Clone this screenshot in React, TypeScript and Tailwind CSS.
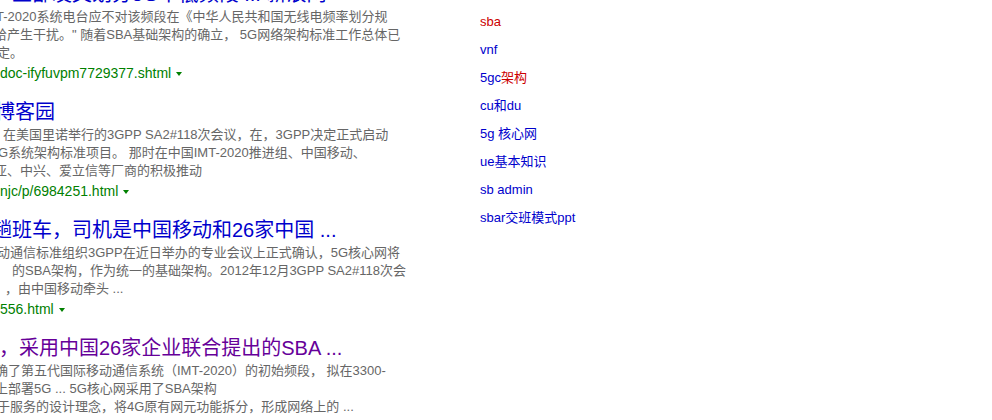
import React from 'react';

type Line = { text: string; shift: string };

type Result = {
  title: string;
  titleShift: string;
  visited?: boolean;
  lines: Line[];
  url: string;
};

const results: Result[] = [
  {
    title: '产业部发文划分5G中低频段 ... 新浪网',
    titleShift: 'ml-[-8px]',
    lines: [
      { text: 'T-2020系统电台应不对该频段在《中华人民共和国无线电频率划分规', shift: 'ml-[-4px]' },
      { text: '给产生干扰。" 随着SBA基础架构的确立， 5G网络架构标准工作总体已', shift: 'ml-[-6px]' },
      { text: '定。', shift: 'ml-[-3px]' },
    ],
    url: 'doc-ifyfuvpm7729377.shtml',
  },
  {
    title: '博客园',
    titleShift: 'ml-[-5px]',
    lines: [
      { text: '在美国里诺举行的3GPP SA2#118次会议，在，3GPP决定正式启动', shift: 'ml-[3px]' },
      { text: 'G系统架构标准项目。 那时在中国IMT-2020推进组、中国移动、', shift: 'ml-[-2px]' },
      { text: '亚、中兴、爱立信等厂商的积极推动', shift: 'ml-[-6px]' },
    ],
    url: 'njc/p/6984251.html',
  },
  {
    title: '趟班车，司机是中国移动和26家中国 ...',
    titleShift: 'ml-[-8px]',
    lines: [
      { text: '动通信标准组织3GPP在近日举办的专业会议上正式确认，5G核心网将', shift: 'ml-[-3px]' },
      { text: '的SBA架构，作为统一的基础架构。2012年12月3GPP SA2#118次会', shift: 'ml-[12px]' },
      { text: '，由中国移动牵头 ...', shift: 'ml-[5px]' },
    ],
    url: '556.html',
  },
  {
    title: '，采用中国26家企业联合提出的SBA ...',
    titleShift: 'ml-[-1px]',
    visited: true,
    lines: [
      { text: '确了第五代国际移动通信系统（IMT-2020）的初始频段， 拟在3300-', shift: 'ml-[-5px]' },
      { text: '上部署5G ... 5G核心网采用了SBA架构', shift: 'ml-[-5px]' },
      { text: '于服务的设计理念，将4G原有网元功能拆分，形成网络上的 ...', shift: 'ml-[-3px]' },
    ],
    url: '',
  },
];

const related: { parts: { t: string; red?: boolean }[] }[] = [
  { parts: [{ t: 'sba', red: true }] },
  { parts: [{ t: 'vnf' }] },
  { parts: [{ t: '5gc' }, { t: '架构', red: true }] },
  { parts: [{ t: 'cu和du' }] },
  { parts: [{ t: '5g 核心网' }] },
  { parts: [{ t: 'ue基本知识' }] },
  { parts: [{ t: 'sb admin' }] },
  { parts: [{ t: 'sbar交班模式ppt' }] },
];

function ResultItem({ r }: { r: Result }) {
  return (
    <div className="mb-[16px]">
      <div
        className={`h-[26px] whitespace-nowrap text-[20px] leading-[26px] ${r.titleShift} ${
          r.visited ? 'text-[#660099]' : 'text-[#0000cc]'
        }`}
      >
        {r.title}
      </div>
      <div className="mt-[1px] text-[13px] leading-[18px] text-[#666666]">
        {r.lines.map((l, i) => (
          <div key={i} className={`whitespace-nowrap ${l.shift}`}>
            {l.text}
          </div>
        ))}
      </div>
      {r.url && (
        <div className="mt-[1px] flex h-[20px] items-center whitespace-nowrap text-[14px] leading-[20px] text-[#008000]">
          <span>{r.url}</span>
          <span className="ml-[5px] mt-[1px] inline-block h-0 w-0 border-x-[3.5px] border-t-[4px] border-x-transparent border-t-[#008000]" />
        </div>
      )}
    </div>
  );
}

export default function App() {
  return (
    <div
      className="flex h-[420px] w-[992px] overflow-hidden bg-white"
      style={{ fontFamily: '"Liberation Sans", Arial, "Noto Sans CJK SC", sans-serif' }}
    >
      <div className="w-[480px] shrink-0 overflow-hidden">
        <div className="-mt-[19px]">
          {results.map((r, i) => (
            <ResultItem key={i} r={r} />
          ))}
        </div>
      </div>
      <div className="pt-[8px]">
        {related.map((item, i) => (
          <div key={i} className="whitespace-nowrap text-[13px] leading-[28px] text-[#0000cc]">
            {item.parts.map((p, j) => (
              <span key={j} className={p.red ? 'text-[#cc0000]' : ''}>
                {p.t}
              </span>
            ))}
          </div>
        ))}
      </div>
    </div>
  );
}
